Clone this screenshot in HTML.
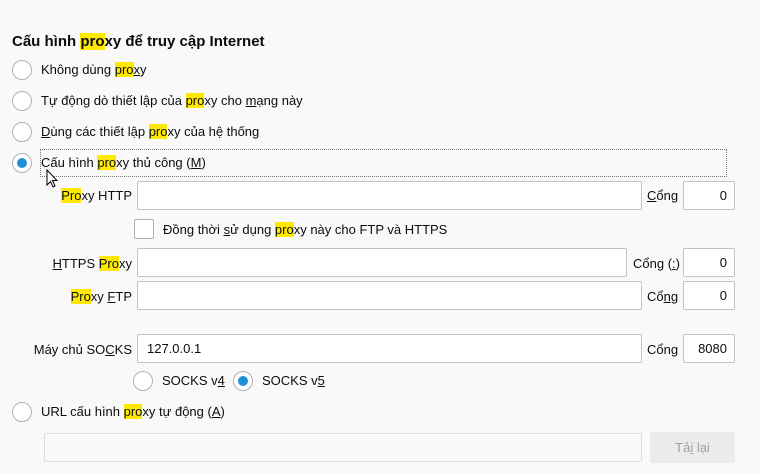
<!DOCTYPE html>
<html><head><meta charset="utf-8"><style>
html,body{margin:0;padding:0;width:760px;height:474px;background:#f9f9f9;overflow:hidden;font-family:"Liberation Sans","DejaVu Sans",sans-serif;color:#0c0c0d;font-size:13px}
.a{position:absolute;white-space:nowrap}
.rt{position:absolute;white-space:nowrap;text-align:right}
.h{background:#ffe900}
u{text-decoration:underline}
.r{position:absolute;width:18px;height:18px;border:1px solid #b1b1b3;border-radius:50%;background:#fff}
.r.on::after{content:"";position:absolute;left:4px;top:4px;width:10px;height:10px;border-radius:50%;background:#1f8fd8}
.in{position:absolute;background:#fff;border:1px solid #c3c3c5;border-radius:2px;box-sizing:border-box;height:29px}
.p{text-align:right;padding-right:7px;line-height:27px}
.lb{line-height:16px}
</style></head><body>
<div class="a" style="left:12px;top:33px;font-size:15px;font-weight:bold">Cấu hình <span class="h">pro</span>xy để truy cập Internet</div>

<div class="r" style="left:12px;top:60px"></div>
<div class="a lb" style="left:41px;top:62px">Không dùng <span class="h">pro</span><u>x</u>y</div>
<div class="r" style="left:12px;top:91px"></div>
<div class="a lb" style="left:41px;top:93px">Tự động dò thiết lập của <span class="h">pro</span>xy cho <u>m</u>ạng này</div>
<div class="r" style="left:12px;top:122px"></div>
<div class="a lb" style="left:41px;top:124px"><u>D</u>ùng các thiết lập <span class="h">pro</span>xy của hệ thống</div>
<div class="r on" style="left:12px;top:153px"></div>
<div class="a" style="left:40px;top:149px;width:685px;height:26px;border:1px dotted #777"></div>
<div class="a lb" style="left:41px;top:155px">Cấu hình <span class="h">pro</span>xy thủ công (<u>M</u>)</div>
<svg class="a" style="left:46px;top:169px" width="14" height="20" viewBox="0 0 14 20"><path d="M1 1 L1 16 L4.5 12.5 L7 18 L9 17 L6.5 11.5 L11 11.5 Z" fill="#fff" stroke="#000" stroke-width="1"/></svg>

<div class="rt lb" style="right:628px;top:188px"><span class="h">Pro</span>xy HTTP</div>
<div class="in" style="left:137px;top:181px;width:505px"></div>
<div class="a lb" style="left:647px;top:188px"><u>C</u>ổng</div>
<div class="in p" style="left:683px;top:181px;width:52px">0</div>

<div class="a" style="left:134px;top:219px;width:18px;height:18px;border:1px solid #b1b1b3;border-radius:2px;background:#fff"></div>
<div class="a lb" style="left:163px;top:222px">Đồng thời <u>s</u>ử dụng <span class="h">pro</span>xy này cho FTP và HTTPS</div>

<div class="rt lb" style="right:628px;top:256px"><u>H</u>TTPS <span class="h">Pro</span>xy</div>
<div class="in" style="left:137px;top:248px;width:490px"></div>
<div class="rt lb" style="right:80px;top:256px">Cổng (<u>:</u>)</div>
<div class="in p" style="left:683px;top:248px;width:52px">0</div>

<div class="rt lb" style="right:628px;top:289px"><span class="h">Pro</span>xy <u>F</u>TP</div>
<div class="in" style="left:137px;top:281px;width:505px"></div>
<div class="a lb" style="left:647px;top:289px">Cổ<u>n</u>g</div>
<div class="in p" style="left:683px;top:281px;width:52px">0</div>

<div class="rt lb" style="right:628px;top:342px">Máy chủ SO<u>C</u>KS</div>
<div class="in" style="left:137px;top:334px;width:505px;padding-left:9px;line-height:27px">127.0.0.1</div>
<div class="a lb" style="left:647px;top:342px">Cổng</div>
<div class="in p" style="left:683px;top:334px;width:52px">8080</div>

<div class="r" style="left:133px;top:371px"></div>
<div class="a lb" style="left:162px;top:373px">SOCKS v<u>4</u></div>
<div class="r on" style="left:233px;top:371px"></div>
<div class="a lb" style="left:262px;top:373px">SOCKS v<u>5</u></div>

<div class="r" style="left:12px;top:402px"></div>
<div class="a lb" style="left:41px;top:404px">URL cấu hình <span class="h">pro</span>xy tự động (<u>A</u>)</div>
<div class="in" style="left:44px;top:433px;width:598px;background:#f9f9f9;border-color:#dcdcdc"></div>
<div class="a" style="left:650px;top:432px;width:85px;height:31px;background:#ebebeb;border-radius:2px;color:#a0a0a0;text-align:center;line-height:31px">Tả<u>i</u> lại</div>
</body></html>
